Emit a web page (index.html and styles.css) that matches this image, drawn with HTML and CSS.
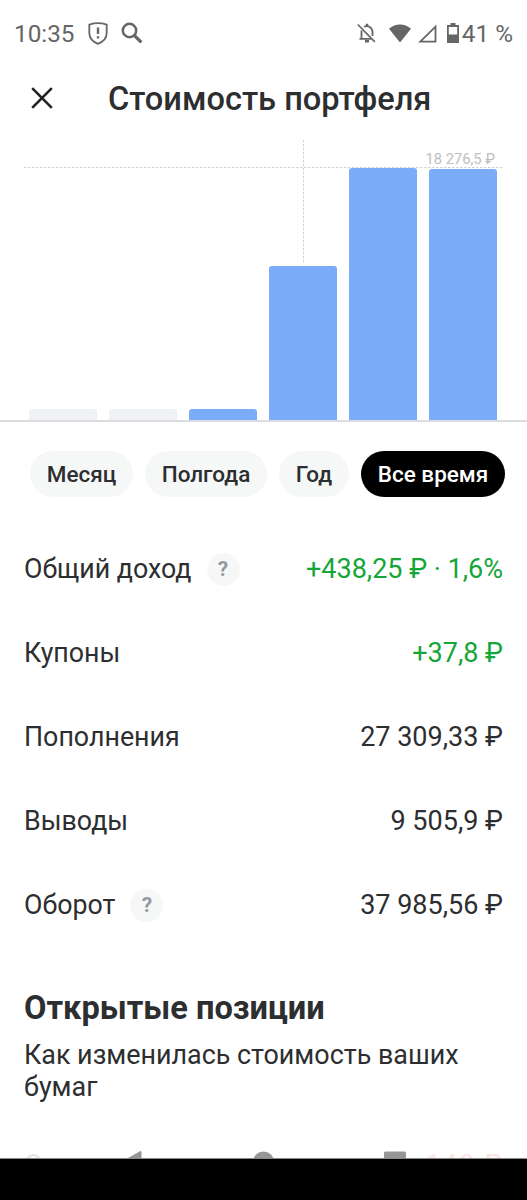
FILE: index.html
```html
<!DOCTYPE html>
<html lang="ru">
<head>
    <meta charset="UTF-8">
    <meta name="viewport" content="width=device-width, initial-scale=1.0">
    <title>Стоимость портфеля</title>
    <link rel="stylesheet" href="styles.css">
</head>
<body>
    <div class="screen">

        <div class="status-bar">
            <span class="clock">10:35</span>
            <svg class="icon-shield" width="20" height="23" viewBox="0 0 20 23">
                <path d="M10 1.2C7.4 1.2 4 1.8 1.3 2.6v8.2c0 5 3.4 9 8.7 11 5.3-2 8.7-6 8.7-11V2.6C16 1.8 12.6 1.2 10 1.2z" fill="none" stroke="#666" stroke-width="1.8"/>
                <path d="M10 5.5v6.5M10 14.2v2.4" stroke="#666" stroke-width="2.4"/>
            </svg>
            <svg class="icon-search" width="22" height="22" viewBox="0 0 22 22" fill="none" stroke="#666">
                <circle cx="8.5" cy="8.5" r="6.7" stroke-width="2.5"/>
                <path d="M13.3 13.3L20.3 20.3" stroke-width="3.2"/>
            </svg>
            <span class="spacer"></span>
            <svg class="icon-bell" width="19" height="20" viewBox="0 0 19 20" fill="none" stroke="#666">
                <path d="M4.5 7.5v8M2.5 15.8h11.5M7 3.8c4-1.8 8.5.5 8.5 5.2v4" stroke-width="1.8"/>
                <path d="M10 .8v2.5M8 18.3h4" stroke-width="2.4"/>
                <path d="M.8 1.5L17.8 18.8" stroke-width="1.7"/>
            </svg>
            <svg class="icon-wifi" width="22" height="19" viewBox="0 0 22 19">
                <path d="M0 4.8C6-1 16-1 22 4.8L11 18.5z" fill="#666"/>
            </svg>
            <svg class="icon-signal" width="19" height="19" viewBox="0 0 19 19">
                <path d="M2.3 17.6L17.5 2.6v15z" fill="none" stroke="#666" stroke-width="1.8"/>
            </svg>
            <svg class="icon-battery" width="12" height="20" viewBox="0 0 12 20">
                <path d="M3.5 0h5v2H12v18H0V2h3.5zM1.8 4v7.5h8.4V4z" fill="#666" fill-rule="evenodd"/>
            </svg>
            <span class="charge">41 %</span>
        </div>

        <header class="header">
            <svg class="close" width="22" height="22" viewBox="0 0 22 22">
                <path d="M1.2 1.2l19.6 19.6M20.8 1.2L1.2 20.8" stroke="#222" stroke-width="2.6"/>
            </svg>
            <h1>Стоимость портфеля</h1>
        </header>

        <div class="chart">
            <svg class="grid-lines" width="527" height="281" viewBox="0 0 527 281" fill="none" stroke="#d2d2d4" stroke-dasharray="2.5 1.5">
                <path d="M24 27.5h479M303.5 0v124"/>
            </svg>
            <span class="chart-max">18 276,5 ₽</span>
            <div class="bars">
                <div class="bar empty" style="height: 11.5px"></div>
                <div class="bar empty" style="height: 11.5px"></div>
                <div class="bar" style="height: 11.5px"></div>
                <div class="bar" style="height: 154.5px"></div>
                <div class="bar" style="height: 252px"></div>
                <div class="bar" style="height: 251.5px"></div>
            </div>
        </div>

        <div class="periods">
            <button class="period p-month">Месяц</button>
            <button class="period p-half">Полгода</button>
            <button class="period p-year">Год</button>
            <button class="period p-all active">Все время</button>
        </div>

        <div class="stats">
            <div class="row">
                <span class="name">Общий доход</span>
                <span class="help">?</span>
                <span class="value green">+438,25 ₽ · 1,6%</span>
            </div>
            <div class="row">
                <span class="name">Купоны</span>
                <span class="value green">+37,8 ₽</span>
            </div>
            <div class="row">
                <span class="name">Пополнения</span>
                <span class="value">27 309,33 ₽</span>
            </div>
            <div class="row">
                <span class="name">Выводы</span>
                <span class="value">9 505,9 ₽</span>
            </div>
            <div class="row">
                <span class="name">Оборот</span>
                <span class="help">?</span>
                <span class="value">37 985,56 ₽</span>
            </div>
        </div>

        <section class="positions">
            <h2>Открытые позиции</h2>
            <p>Как изменилась стоимость ваших бумаг</p>
            <div class="position">
                <span>О</span>
                <span class="loss">140 ₽</span>
            </div>
        </section>

        <!-- системные кнопки -->
        <svg class="nav-buttons" width="527" height="7" viewBox="0 0 527 7" fill="#969696">
            <path d="M128 7L139.5.4q2-1 2 1V7z"/>
            <circle cx="263.5" cy="11" r="10.5"/>
            <rect x="384" y=".5" width="22" height="20" rx="1.5"/>
        </svg>
    </div>
    <div class="nav-bar"></div>
</body>
</html>
```
FILE: styles.css
```css
* {
    box-sizing: border-box;
}

body {
    margin: 0;
    width: 527px;
    height: 1200px;
    overflow: hidden;
    background: #000;
    font-family: Roboto, "Noto Sans", sans-serif;
    color: #2d2e30;
}

.screen {
    position: relative;
    height: 1159px;
    overflow: hidden;
    background: #fff;
    border-bottom: 1px solid #888;
}

/* Статус-бар */
.status-bar {
    display: flex;
    align-items: center;
    height: 66px;
    padding: 0 14px;
    font-size: 24.3px;
    color: #666;
}

.clock {
    width: 60px;
    margin-right: 14px;
}

.icon-shield {
    margin-right: 13px;
}

.spacer {
    flex: 1;
}

.icon-bell {
    margin-right: 13px;
}

.icon-wifi {
    margin-right: 7px;
}

.icon-signal {
    margin-right: 10px;
}

.icon-battery {
    margin: 0 3px 1px 0;
}

/* Шапка */
.header {
    display: flex;
    align-items: center;
    height: 64px;
    padding-left: 31px;
}

.header h1 {
    margin: 0 0 0 55px;
    padding-top: 2px;
    font-size: 32.6px;
    font-weight: 500;
    line-height: 40px;
    white-space: nowrap;
}

/* График */
.chart {
    position: relative;
    display: flex;
    align-items: flex-end;
    height: 292px;
    border-bottom: 2px solid #dcdde0;
}

.grid-lines {
    position: absolute;
    left: 0;
    top: 10px;
}

.chart-max {
    position: absolute;
    right: 32px;
    top: 19px;
    font-size: 14.7px;
    line-height: 20px;
    color: #bdbec2;
}

.bars {
    display: flex;
    align-items: flex-end;
    gap: 12px;
    padding-left: 29.4px;
}

.bar {
    width: 68px;
    border-radius: 3px 3px 0 0;
    background: #7aacfa;
}

.bar.empty {
    background: #f0f1f3;
}

/* Периоды */
.periods {
    display: flex;
    gap: 12px;
    margin-top: 29px;
    padding-left: 30px;
}

.period {
    height: 46px;
    padding: 0;
    border: none;
    border-radius: 23px;
    background: #f6f8f8;
    font-family: inherit;
    font-size: 22.5px;
    font-weight: 500;
    color: #2d2e30;
    white-space: nowrap;
}

.p-month {
    width: 103px;
}

.p-half {
    width: 122px;
}

.p-year {
    width: 70px;
}

.p-all {
    width: 144px;
}

.period.active {
    background: #000;
    color: #fff;
}

/* Показатели */
.stats {
    padding: 30px 24px 0;
}

.row {
    display: flex;
    align-items: center;
    height: 84px;
    font-size: 27px;
}

.name {
    font-size: 26.8px;
}

.help {
    width: 33px;
    height: 33px;
    margin-left: 15px;
    border-radius: 50%;
    background: #f6f8f8;
    font-size: 21px;
    font-weight: 700;
    line-height: 33px;
    text-align: center;
    color: #9299a2;
}

.value {
    margin-left: auto;
}

.green {
    color: #14a637;
}

/* Открытые позиции */
.positions {
    padding: 40px 24px 0;
}

.positions h2 {
    margin: 0;
    font-size: 32.6px;
    font-weight: 700;
    line-height: 42px;
}

.positions p {
    margin: 10px 0 0;
    font-size: 26.9px;
    line-height: 32px;
}

.position {
    display: flex;
    justify-content: space-between;
    margin-top: 46px;
    font-size: 27px;
    line-height: 32px;
    opacity: 0.12;
}

.loss {
    font-size: 28px;
    letter-spacing: 1px;
    color: #e03030;
}

.nav-buttons {
    position: absolute;
    left: 0;
    bottom: 0;
}

.nav-bar {
    height: 41px;
    background: #000;
}
```
